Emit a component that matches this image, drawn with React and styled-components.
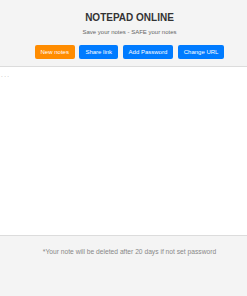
import React from "react";
import styled, { createGlobalStyle } from "styled-components";

const GlobalStyle = createGlobalStyle`
  html, body {
    margin: 0;
    padding: 0;
    background: #f4f4f4;
    font-family: "Liberation Sans", Arial, sans-serif;
  }
`;

const Page = styled.div`
  display: flex;
  flex-direction: column;
  height: 296px;
`;

const Header = styled.header`
  height: 67px;
  box-sizing: border-box;
  padding: 12px 0 0 12px;
  background: #f4f4f4;
  border-bottom: 1px solid #dcdcdc;
  text-align: center;
`;

const Title = styled.h1`
  margin: 0;
  font-size: 10px;
  line-height: 12px;
  font-weight: bold;
  color: #333;
`;

const Subtitle = styled.p`
  margin: 4px 0 0;
  font-size: 6px;
  line-height: 8px;
  color: #666;
`;

const Buttons = styled.div`
  display: flex;
  justify-content: center;
  gap: 4.5px;
  margin-top: 9px;
`;

const Button = styled.button`
  height: 14px;
  padding: 0 6px;
  border: none;
  border-radius: 2px;
  background: ${(props) => (props.orange ? "#ff8c00" : "#007bff")};
  color: #fff;
  font-family: inherit;
  font-size: 6px;
  cursor: pointer;
`;

const Note = styled.textarea`
  flex: 1;
  display: block;
  margin: 0;
  padding: 5px 1px;
  border: none;
  border-bottom: 1px solid #dcdcdc;
  background: #fff;
  resize: none;
  outline: none;
  font-family: inherit;
  font-size: 6px;
  letter-spacing: 1.5px;
  &::placeholder {
    color: #999;
  }
`;

const Footer = styled.footer`
  height: 60px;
  box-sizing: border-box;
  padding: 12px 0 0 12px;
  text-align: center;
  font-size: 6.7px;
  color: #888;
`;

const App = () => {
  return (
    <Page>
      <GlobalStyle />
      <Header>
        <Title>NOTEPAD ONLINE</Title>
        <Subtitle>Save your notes - SAFE your notes</Subtitle>
        <Buttons>
          <Button orange>New notes</Button>
          <Button>Share link</Button>
          <Button>Add Password</Button>
          <Button>Change URL</Button>
        </Buttons>
      </Header>
      <Note placeholder="..." />
      <Footer>*Your note will be deleted after 20 days if not set password</Footer>
    </Page>
  );
};

export default App;
